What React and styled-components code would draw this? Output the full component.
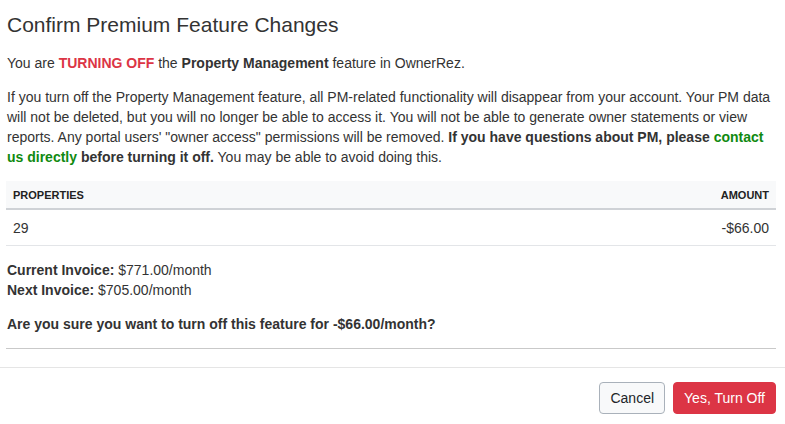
import React from 'react';
import styled, { createGlobalStyle } from 'styled-components';

const GlobalStyle = createGlobalStyle`
  html, body {
    margin: 0;
    padding: 0;
    background: #fff;
  }
  body {
    font-family: "Liberation Sans", Arial, sans-serif;
    font-size: 14px;
    line-height: 20px;
    color: #333;
  }
`;

// === MODAL ===
const Modal = styled.div`
  width: 785px;
  background: #fff;
`;

const Header = styled.div`
  padding: 13px 9px 0 7px;
`;

const Title = styled.h4`
  margin: 0;
  font-size: 21px;
  line-height: 24px;
  font-weight: 400;
  color: #333;
`;

const Body = styled.div`
  padding: 16px 9px 18px 6px;
`;

const Para = styled.p`
  margin: 0 0 14px;
  padding-left: 1px;
`;

const Danger = styled.strong`
  color: #dc3545;
`;

const Link = styled.a`
  color: #108a10;
  font-weight: 700;
  text-decoration: none;
`;

// === TABLE ===
const Table = styled.table`
  width: 100%;
  border-collapse: collapse;
  margin-bottom: 14px;
`;

const Th = styled.th`
  background: #f8f9fa;
  padding: 7px 7px 5px;
  font-size: 11px;
  line-height: 15px;
  font-weight: 700;
  text-transform: uppercase;
  color: #222;
  text-align: ${p => (p.$right ? 'right' : 'left')};
  border-bottom: 2px solid #cfd2d6;
`;

const Td = styled.td`
  padding: 8px 7px 7px;
  text-align: ${p => (p.$right ? 'right' : 'left')};
  border-bottom: 1px solid #e3e5e8;
`;

const Line = styled.div`
  padding-left: 1px;
`;

const Summary = styled.div`
  margin-bottom: 14px;
`;

const Question = styled.div`
  font-weight: 700;
  padding-left: 1px;
  margin-bottom: 14px;
`;

const Rule = styled.hr`
  margin: 0;
  border: 0;
  border-top: 1px solid #c9c9c9;
`;

// === FOOTER ===
const Footer = styled.div`
  border-top: 1px solid #e5e5e5;
  padding: 14px 9px 10px;
  display: flex;
  justify-content: flex-end;
  gap: 8px;
`;

const Button = styled.button`
  height: 32px;
  padding: 0 10px;
  font-family: "Liberation Sans", Arial, sans-serif;
  font-size: 14px;
  border-radius: 4px;
  cursor: pointer;
  border: 1px solid ${p => (p.$danger ? '#dc3545' : '#a9b1ba')};
  background: ${p => (p.$danger ? '#dc3545' : '#f8f9fa')};
  color: ${p => (p.$danger ? '#fff' : '#212529')};
`;

export default function App() {
  return (
    <>
      <GlobalStyle />
      <Modal>
        <Header>
          <Title>Confirm Premium Feature Changes</Title>
        </Header>
        <Body>
          <Para>
            You are <Danger>TURNING OFF</Danger> the <strong>Property Management</strong> feature in OwnerRez.
          </Para>
          <Para>
            If you turn off the Property Management feature, all PM-related functionality will disappear from your
            account. Your PM data will not be deleted, but you will no longer be able to access it. You will not be
            able to generate owner statements or view reports. Any portal users' "owner access" permissions will be
            removed. <strong>If you have questions about PM, please <Link href="#">contact us directly</Link> before
            turning it off.</strong> You may be able to avoid doing this.
          </Para>
          <Table>
            <thead>
              <tr>
                <Th>Properties</Th>
                <Th $right>Amount</Th>
              </tr>
            </thead>
            <tbody>
              <tr>
                <Td>29</Td>
                <Td $right>-$66.00</Td>
              </tr>
            </tbody>
          </Table>
          <Summary>
            <Line><strong>Current Invoice:</strong> $771.00/month</Line>
            <Line><strong>Next Invoice:</strong> $705.00/month</Line>
          </Summary>
          <Question>Are you sure you want to turn off this feature for -$66.00/month?</Question>
          <Rule />
        </Body>
        <Footer>
          <Button>Cancel</Button>
          <Button $danger>Yes, Turn Off</Button>
        </Footer>
      </Modal>
    </>
  );
}
